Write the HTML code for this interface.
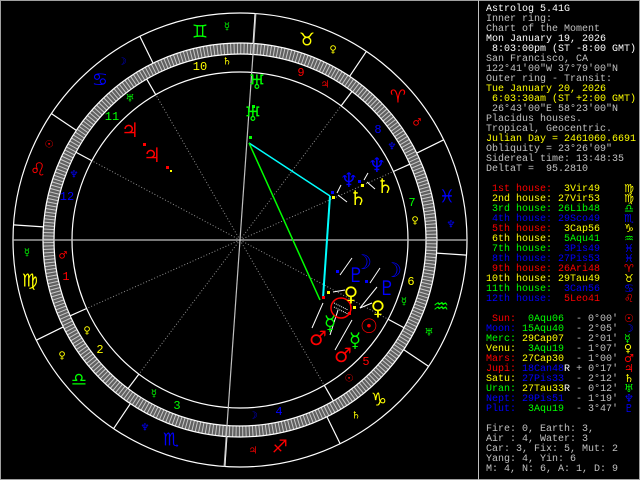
<!DOCTYPE html>
<html><head><meta charset="utf-8"><style>
html,body{margin:0;padding:0;background:#000;}
body{width:640px;height:480px;position:relative;overflow:hidden;}
svg{position:absolute;left:0;top:0;}
#p{position:absolute;left:486px;top:5px;font-family:"Liberation Mono",monospace;font-size:10px;line-height:10px;white-space:pre;color:#c0c0c0;}
.w{color:#fff}.y{color:#ffff00}.r{color:#ff0000}.g{color:#00ff00}.b{color:#0000ff}
.gl{position:absolute;font-family:"DejaVu Sans",sans-serif;font-size:10px;}
</style></head><body>
<svg width="640" height="480" viewBox="0 0 640 480" font-family="DejaVu Sans, sans-serif" text-anchor="middle" dominant-baseline="central">
<rect x="0.5" y="0.5" width="639" height="479" fill="none" stroke="#a0a0a0"/>
<line x1="478.5" y1="0" x2="478.5" y2="480" stroke="#c0c0c0"/>
<g transform="translate(240,240)">
 <circle r="191.5" fill="none" stroke="#606060" stroke-width="11"/>
 <circle r="191.5" fill="none" stroke="#c8c8c8" stroke-width="11" stroke-dasharray="1 2.342"/>
 <g fill="none" stroke="#fff" stroke-width="1.2">
  <circle r="227"/><circle r="197"/><circle r="186"/><circle r="168"/>
 </g>
 <g stroke="#fff" stroke-width="1.2">
  <line x1="197" x2="227" transform="rotate(-26.18)"/><line x1="197" x2="227" transform="rotate(-56.18)"/>
  <line x1="197" x2="227" transform="rotate(-86.18)"/><line x1="197" x2="227" transform="rotate(-116.18)"/>
  <line x1="197" x2="227" transform="rotate(-146.18)"/><line x1="197" x2="227" transform="rotate(-176.18)"/>
  <line x1="197" x2="227" transform="rotate(-206.18)"/><line x1="197" x2="227" transform="rotate(-236.18)"/>
  <line x1="197" x2="227" transform="rotate(-266.18)"/><line x1="197" x2="227" transform="rotate(-296.18)"/>
  <line x1="197" x2="227" transform="rotate(-326.18)"/><line x1="197" x2="227" transform="rotate(-356.18)"/>
  <line x1="168" x2="186" transform="rotate(-204.06)"/><line x1="168" x2="186" transform="rotate(-233)"/>
  <line x1="168" x2="186" transform="rotate(-300.11)"/><line x1="168" x2="186" transform="rotate(-331.86)"/>
  <line x1="168" x2="186" transform="rotate(-24.06)"/><line x1="168" x2="186" transform="rotate(-53)"/>
  <line x1="168" x2="186" transform="rotate(-120.11)"/><line x1="168" x2="186" transform="rotate(-151.86)"/>
 </g>
 <g stroke="#909090" stroke-width="1" stroke-dasharray="1 2">
  <line x1="0" x2="168" transform="rotate(-204.06)"/><line x1="0" x2="168" transform="rotate(-233)"/>
  <line x1="0" x2="168" transform="rotate(-300.11)"/><line x1="0" x2="168" transform="rotate(-331.86)"/>
  <line x1="0" x2="168" transform="rotate(-24.06)"/><line x1="0" x2="168" transform="rotate(-53)"/>
  <line x1="0" x2="168" transform="rotate(-120.11)"/><line x1="0" x2="168" transform="rotate(-151.86)"/>
 </g>
 <g stroke="#c0c0c0" stroke-width="1.2">
  <line x1="-227" x2="227"/>
  <line x1="-227" x2="227" transform="rotate(-86)"/>
 </g>
</g>
<line x1="249" y1="143" x2="330" y2="196" stroke="#00ffff" stroke-width="1.5"/>
<line x1="330" y1="196" x2="323" y2="298" stroke="#00ffff" stroke-width="2"/>
<line x1="249" y1="143" x2="320" y2="300" stroke="#00ff00" stroke-width="1.5"/>
<g stroke="#fff" stroke-width="1">
 <line x1="352" y1="258" x2="340" y2="275"/><line x1="380" y1="268" x2="370" y2="283"/>
 <line x1="377" y1="287" x2="360" y2="308"/><line x1="323" y1="303" x2="312" y2="328"/>
 <line x1="352" y1="320" x2="335" y2="350"/><line x1="368" y1="173" x2="364" y2="180"/>
 <line x1="367" y1="182" x2="375" y2="189"/><line x1="341" y1="185" x2="337" y2="193"/>
 <line x1="338" y1="195" x2="347" y2="202"/><line x1="345" y1="290" x2="333" y2="292"/>
 <line x1="372" y1="303" x2="360" y2="308"/><line x1="338" y1="310" x2="330" y2="335"/>
</g>
<g>
 <rect x="143" y="143" width="3" height="3" fill="#f00"/><rect x="166" y="166" width="3" height="3" fill="#f00"/><rect x="170" y="170" width="2" height="2" fill="#ff0"/>
 <rect x="252" y="105" width="3" height="3" fill="#0f0"/><rect x="249" y="136" width="3" height="3" fill="#0f0"/>
 <rect x="358" y="180" width="3" height="3" fill="#00f"/><rect x="331" y="191" width="3" height="3" fill="#00f"/>
 <rect x="361" y="184" width="3" height="3" fill="#ff0"/><rect x="332" y="196" width="3" height="3" fill="#ff0"/>
 <rect x="336" y="270" width="3" height="3" fill="#00f"/><rect x="365" y="280" width="3" height="3" fill="#00f"/>
 <rect x="327" y="291" width="3" height="3" fill="#ff0"/><rect x="353" y="306" width="3" height="3" fill="#ff0"/>
 <rect x="322" y="296" width="3" height="3" fill="#f00"/><rect x="348" y="312" width="3" height="3" fill="#f00"/>
</g>
<circle cx="341" cy="308" r="10" fill="none" stroke="#f00" stroke-width="1.5"/>
<g stroke="#fff" stroke-dasharray="1 1"><line x1="334" y1="303" x2="348" y2="310"/><line x1="334" y1="307" x2="348" y2="314"/></g>
<g font-size="18">
 <text x="307" y="40" fill="#ffff00">♉</text>
 <text x="200" y="32" fill="#00ff00">♊</text>
 <text x="100" y="80" fill="#0000ff">♋</text>
 <text x="38" y="170" fill="#ff0000">♌</text>
 <text x="30" y="281" fill="#ffff00">♍</text>
 <text x="79" y="380" fill="#00ff00">♎</text>
 <text x="171" y="440" fill="#0000ff">♏</text>
 <text x="280" y="447" fill="#ff0000">♐</text>
 <text x="379" y="400" fill="#ffff00">♑</text>
 <text x="441" y="307" fill="#00ff00">♒</text>
 <text x="447" y="197" fill="#0000ff">♓</text>
 <text x="398" y="97" fill="#ff0000">♈</text>
</g>
<g font-size="10">
 <text x="227" y="27" fill="#00ff00">☿</text><text x="227" y="62" fill="#ffff00">♄</text>
 <text x="122" y="62" fill="#0000ff">☽</text><text x="130" y="99" fill="#00ff00">♅</text>
 <text x="49" y="145" fill="#ff0000">☉</text><text x="74" y="175" fill="#0000ff">♆</text>
 <text x="333" y="50" fill="#ffff00">♀</text><text x="325" y="85" fill="#ff0000">♃</text>
 <text x="417" y="123" fill="#ff0000">♂</text><text x="392" y="147" fill="#0000ff">♆</text>
 <text x="415" y="221" fill="#ffff00">♀</text><text x="451" y="225" fill="#0000ff">♆</text>
 <text x="404" y="302" fill="#00ff00">☿</text><text x="429" y="333" fill="#00ff00">♅</text>
 <text x="349" y="379" fill="#ff0000">☉</text><text x="356" y="416" fill="#ffff00">♄</text>
 <text x="253" y="416" fill="#0000ff">☽</text><text x="253" y="451" fill="#ff0000">♃</text>
 <text x="27" y="253" fill="#00ff00">☿</text><text x="63" y="256" fill="#ff0000">♂</text>
 <text x="87" y="331" fill="#ffff00">♀</text><text x="62" y="356" fill="#ffff00">♀</text>
 <text x="154" y="394" fill="#00ff00">☿</text><text x="145" y="428" fill="#0000ff">♆</text>
</g>
<g font-family="Liberation Mono, monospace" font-size="12">
 <text x="200" y="67" fill="#ffff00">10</text><text x="112" y="117" fill="#00ff00">11</text>
 <text x="67" y="197" fill="#0000ff">12</text><text x="66" y="277" fill="#ff0000">1</text>
 <text x="100" y="350" fill="#ffff00">2</text><text x="177" y="406" fill="#00ff00">3</text>
 <text x="279" y="412" fill="#0000ff">4</text><text x="366" y="362" fill="#ff0000">5</text>
 <text x="411" y="282" fill="#ffff00">6</text><text x="412" y="203" fill="#00ff00">7</text>
 <text x="378" y="130" fill="#0000ff">8</text><text x="301" y="73" fill="#ff0000">9</text>
</g>
<g font-size="20">
 <text x="130" y="130" fill="#ff0000">♃</text><text x="152" y="155" fill="#ff0000">♃</text>
 <text x="257" y="82" fill="#00ff00">♅</text><text x="253" y="114" fill="#00ff00">♅</text>
 <text x="377" y="165" fill="#0000ff">♆</text><text x="349" y="180" fill="#0000ff">♆</text>
 <text x="385" y="186" fill="#ffff00">♄</text><text x="358" y="198" fill="#ffff00">♄</text>
 <text x="363" y="262" fill="#0000ff">☽</text><text x="393" y="270" fill="#0000ff">☽</text>
 <text x="356" y="275" fill="#0000ff">♇</text><text x="387" y="288" fill="#0000ff">♇</text>
 <text x="351" y="294" fill="#ffff00">♀</text><text x="378" y="308" fill="#ffff00">♀</text>
 <text x="369" y="326" fill="#ff0000">☉</text>
 <text x="330" y="323" fill="#00ff00">☿</text><text x="355" y="340" fill="#00ff00">☿</text>
 <text x="318" y="338" fill="#ff0000">♂</text><text x="343" y="355" fill="#ff0000">♂</text>
</g>
</svg>
<div id="p"><span class="w">Astrolog 5.41G</span>
Inner ring:
Chart of the Moment
<span class="w">Mon January 19, 2026</span>
<span class="w"> 8:03:00pm (ST -8:00 GMT)</span>
San Francisco, CA
122°41'00"W 37°79'00"N
Outer ring - Transit:
<span class="y">Tue January 20, 2026</span>
<span class="y"> 6:03:30am (ST +2:00 GMT)</span>
 26°43'00"E 58°23'00"N
Placidus houses.
Tropical, Geocentric.
<span class="y">Julian Day = 2461060.6691</span>
Obliquity = 23°26'09"
Sidereal time: 13:48:35
DeltaT =  95.2810

<span class="r"> 1st house:</span>  <span class="y">3Vir49</span>
<span class="y"> 2nd house:</span> <span class="y">27Vir53</span>
<span class="g"> 3rd house:</span> <span class="g">26Lib48</span>
<span class="b"> 4th house:</span> <span class="b">29Sco49</span>
<span class="r"> 5th house:</span>  <span class="y">3Cap56</span>
<span class="y"> 6th house:</span>  <span class="g">5Aqu41</span>
<span class="g"> 7th house:</span>  <span class="b">3Pis49</span>
<span class="b"> 8th house:</span> <span class="b">27Pis53</span>
<span class="r"> 9th house:</span> <span class="r">26Ari48</span>
<span class="y">10th house:</span> <span class="y">29Tau49</span>
<span class="g">11th house:</span>  <span class="b">3Can56</span>
<span class="b">12th house:</span>  <span class="r">5Leo41</span>

<span class="r"> Sun:</span>  <span class="g">0Aqu06</span>  - 0°00'
<span class="b">Moon:</span> <span class="g">15Aqu40</span>  - 2°05'
<span class="g">Merc:</span> <span class="y">29Cap07</span>  - 2°01'
<span class="y">Venu:</span>  <span class="g">3Aqu19</span>  - 1°07'
<span class="r">Mars:</span> <span class="y">27Cap30</span>  - 1°00'
<span class="r">Jupi:</span> <span class="b">18Can48</span><span class="w">R</span> + 0°17'
<span class="y">Satu:</span> <span class="b">27Pis33</span>  - 2°12'
<span class="g">Uran:</span> <span class="y">27Tau33</span><span class="w">R</span> - 0°12'
<span class="b">Nept:</span> <span class="b">29Pis51</span>  - 1°19'
<span class="b">Plut:</span>  <span class="g">3Aqu19</span>  - 3°47'

Fire: 0, Earth: 3,
Air : 4, Water: 3
Car: 3, Fix: 5, Mut: 2
Yang: 4, Yin: 6
M: 4, N: 6, A: 1, D: 9</div>
<div class="gl" style="left:624px;top:184px;font-size:11px;line-height:10px;white-space:pre"><span class="y">♍</span>
<span class="y">♍</span>
<span class="g">♎</span>
<span class="b">♏</span>
<span class="y">♑</span>
<span class="g">♒</span>
<span class="b">♓</span>
<span class="b">♓</span>
<span class="r">♈</span>
<span class="y">♉</span>
<span class="b">♋</span>
<span class="r">♌</span>

<span class="r">☉</span>
<span class="b">☽</span>
<span class="g">☿</span>
<span class="y">♀</span>
<span class="r">♂</span>
<span class="r">♃</span>
<span class="y">♄</span>
<span class="g">♅</span>
<span class="b">♆</span>
<span class="b">♇</span></div>
</body></html>
